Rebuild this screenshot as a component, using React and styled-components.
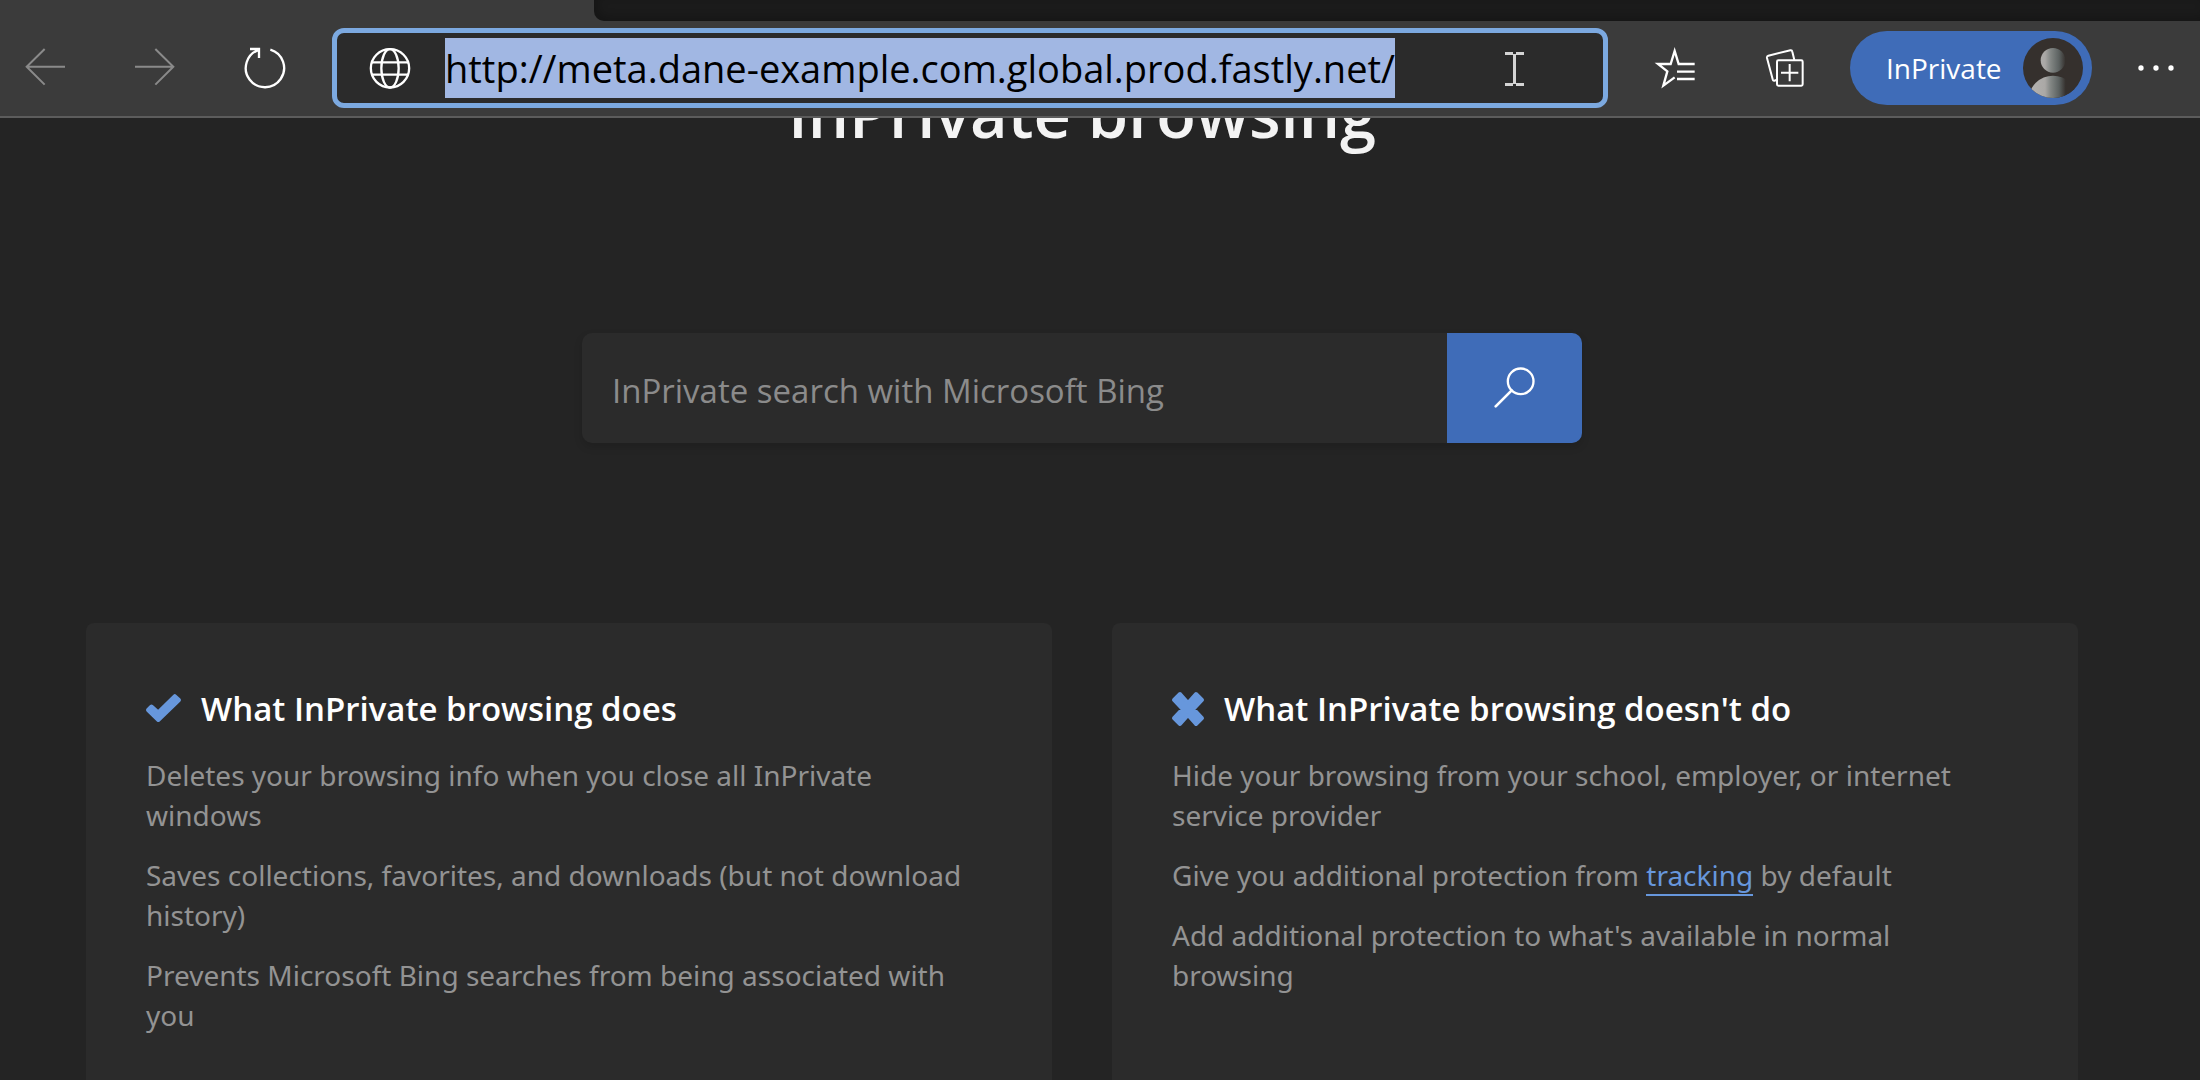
import React, { useEffect, useRef } from 'react';
import styled, { createGlobalStyle } from 'styled-components';

const color = {
  toolbar: '#3b3b3b',
  strip: '#1b1b1b',
  divider: '#5c5c5c',
  page: '#242424',
  surface: '#2b2b2b',
  blue: '#3f6cb8',
  ring: '#7ca9e0',
  accent: '#6797dc',
  text: '#ffffff',
  muted: '#939393',
  disabled: '#8a8a8a',
};

const uiFont = '"Segoe UI", "Open Sans", "Noto Sans", sans-serif';
const bodyFont = '"Segoe UI", "Noto Sans", "Open Sans", sans-serif';

const GlobalStyle = createGlobalStyle`
  *, *::before, *::after { box-sizing: border-box; }
  body {
    margin: 0;
    background: ${color.page};
    color: ${color.text};
    font-family: ${uiFont};
  }
  button, input { font-family: inherit; }
`;

const Window = styled.div`
  display: flex;
  flex-direction: column;
  height: 100vh;
  overflow: hidden;
`;

const Chrome = styled.header`
  flex: none;
  background: ${color.toolbar};
  border-bottom: 2px solid ${color.divider};
`;

const TabStrip = styled.div`
  display: grid;
  grid-template-columns: 27% 1fr;
  height: 21px;
`;

const StripSpace = styled.div`
  grid-column: 2;
  background: ${color.strip};
  border-bottom-left-radius: 10px;
  box-shadow: inset 4px -4px 8px rgba(0, 0, 0, 0.2);
`;

const Toolbar = styled.div`
  display: flex;
  align-items: center;
  gap: 20px;
  height: 95px;
  padding-bottom: 1px;
`;

const IconButton = styled.button`
  flex: none;
  display: flex;
  align-items: center;
  justify-content: center;
  width: ${(p) => p.$w || 90}px;
  height: 80px;
  padding: 0;
  border: 0;
  background: none;
  color: ${(p) => (p.disabled ? color.disabled : color.text)};
`;

const Icon = styled.svg`
  flex: none;
  display: block;
  width: ${(p) => p.$w || 40}px;
  height: ${(p) => p.$h || 40}px;
  overflow: visible;
  fill: none;
  stroke: currentColor;
  stroke-width: ${(p) => p.$stroke || 7};
`;

const AddressBar = styled.div`
  position: relative;
  flex: 1;
  min-width: 0;
  display: flex;
  align-items: center;
  gap: 35px;
  height: 80px;
  margin: 0 2px;
  padding: 0 20px 0 33px;
  background: ${color.surface};
  border: 5px solid ${color.ring};
  border-radius: 12px;
`;

const AddressInput = styled.input`
  flex: 1;
  min-width: 0;
  height: 60px;
  padding: 0;
  border: 0;
  outline: 0;
  background: transparent;
  color: ${color.text};
  font-size: 38px;
  line-height: 60px;

  &::selection {
    background: rgba(162, 184, 228, 0.996);
    color: #000000;
  }
`;

const Pointer = styled(Icon)`
  position: absolute;
  top: 19px;
  right: 79px;
  color: #d4d4d4;
  pointer-events: none;
`;

const Profile = styled.button`
  flex: none;
  display: flex;
  align-items: center;
  justify-content: space-between;
  width: 242px;
  height: 74px;
  padding: 0 9px 0 36px;
  border: 0;
  border-radius: 37px;
  background: ${color.blue};
  color: ${color.text};
  font-size: 28px;
  line-height: 40px;
`;

const Viewport = styled.main`
  flex: 1;
  min-height: 0;
  overflow: hidden;
  padding-right: 36px;
`;

const Content = styled.div`
  display: flex;
  flex-direction: column;
  align-items: center;
  gap: 180px;
  max-width: 1992px;
  margin: -45px auto 0;
`;

const Title = styled.h1`
  margin: 0;
  color: #f3f3f3;
  font-size: 65px;
  line-height: 80px;
  font-weight: 600;
`;

const Search = styled.form`
  display: flex;
  width: 100%;
  max-width: 1000px;
  height: 110px;
  border-radius: 10px;
  overflow: hidden;
  background: ${color.surface};
  box-shadow: 0 4px 8px rgba(0, 0, 0, 0.14);
`;

const SearchInput = styled.input`
  flex: 1;
  min-width: 0;
  padding: 4px 30px 0;
  border: 0;
  outline: 0;
  background: transparent;
  color: ${color.text};
  font-size: 33px;

  &::placeholder {
    color: #8b8b8b;
    opacity: 1;
  }
`;

const SearchButton = styled.button`
  flex: none;
  display: flex;
  align-items: center;
  justify-content: center;
  width: 135px;
  padding: 0;
  border: 0;
  background: ${color.blue};
  color: ${color.text};
`;

const Cards = styled.div`
  display: grid;
  grid-template-columns: 1fr 1fr;
  gap: 60px;
  width: 100%;
`;

const Card = styled.section`
  padding: 60px;
  background: ${color.surface};
  border-radius: 8px;
`;

const CardHeader = styled.div`
  display: flex;
  align-items: center;
  gap: 20px;
  margin-bottom: 20px;
  color: ${color.accent};
`;

const CardTitle = styled.h2`
  margin: 0;
  color: ${color.text};
  font-size: 33px;
  line-height: 52px;
  font-weight: 600;
`;

const Points = styled.ul`
  display: flex;
  flex-direction: column;
  gap: 20px;
  margin: 0;
  padding: 0;
  list-style: none;
  color: ${color.muted};
  font-family: ${bodyFont};
  font-size: 28px;
  line-height: 40px;
`;

const Link = styled.a`
  color: ${color.accent};
  text-decoration: none;
  border-bottom: 2px solid currentColor;
`;

const BackIcon = () => (
  <Icon viewBox="75 144 120 120" $stroke={6} aria-hidden="true">
    <path d="M195 200H80M134 147L80 200L134 254" />
  </Icon>
);

const ForwardIcon = () => (
  <Icon viewBox="405 144 120 120" $stroke={6} aria-hidden="true">
    <path d="M405 200H520M466 147L520 200L466 254" />
  </Icon>
);

const ReloadIcon = () => (
  <Icon viewBox="735 144 120 120" aria-hidden="true">
    <path d="M811 149A57.5 57.5 0 1 1 777 149.500M750 147H777V174" />
  </Icon>
);

const GlobeIcon = () => (
  <Icon viewBox="1110 144 120 120" aria-hidden="true">
    <circle cx="1170" cy="205" r="57.500" />
    <ellipse cx="1170" cy="205" rx="26" ry="57.500" />
    <path d="M1116 187H1224M1116 224H1224" />
  </Icon>
);

const FavoritesIcon = () => (
  <Icon viewBox="46 54 120 120" aria-hidden="true">
    <path d="M165 102H117L105 63L93 102H55L83 124L71 167L105 142" />
    <path d="M112 125H165M112 147H165" />
  </Icon>
);

const CollectionsIcon = () => (
  <Icon viewBox="380 58 120 120" $stroke={6} aria-hidden="true">
    <path d="M414 154L408 156Q404 157 403 152L386 88Q385 83 390 81L456 65Q461 64 462 69L468 94" />
    <rect x="416" y="95" width="77" height="76" rx="4" />
    <path d="M428 132H480M454 106V158" />
  </Icon>
);

const AvatarIcon = () => (
  <Icon viewBox="547 54 180 180" $w={60} $h={60} aria-hidden="true">
    <defs>
      <linearGradient id="person" gradientUnits="userSpaceOnUse" x1="575" y1="0" x2="675" y2="0">
        <stop offset="0" stopColor="#b3b1af" />
        <stop offset="0.380" stopColor="#aaa8a6" />
        <stop offset="0.550" stopColor="#828684" />
        <stop offset="0.800" stopColor="#5c6261" />
        <stop offset="1" stopColor="#35302d" />
      </linearGradient>
      <clipPath id="disc">
        <circle cx="637" cy="144" r="90" />
      </clipPath>
    </defs>
    <circle cx="637" cy="144" r="90" fill="#35302d" stroke="none" />
    <g clipPath="url(#disc)" fill="url(#person)" stroke="none">
      <circle cx="637" cy="121" r="37" />
      <circle cx="637" cy="240" r="73" />
    </g>
  </Icon>
);

const MoreIcon = () => (
  <Icon viewBox="891 84 120 120" aria-hidden="true">
    <g fill="currentColor" stroke="none">
      <circle cx="906" cy="144" r="8" />
      <circle cx="951" cy="144" r="8" />
      <circle cx="996" cy="144" r="8" />
    </g>
  </Icon>
);

const SearchIcon = () => (
  <Icon viewBox="284 174 120 120" aria-hidden="true">
    <circle cx="361" cy="214" r="38.500" />
    <path d="M334 241L286 289" strokeWidth="8" strokeLinecap="round" />
  </Icon>
);

const CheckIcon = () => (
  <Icon viewBox="0 0 35 34" $w={35} $h={34} $stroke={4} aria-hidden="true">
    <path
      d="M2 18L5.500 14.500L12.200 20.500L28.800 4.200L33 8L12.300 28Z"
      fill="currentColor"
      strokeLinejoin="round"
    />
  </Icon>
);

const CrossIcon = () => (
  <Icon viewBox="0 0 32 34" $w={32} $h={34} $stroke={4} aria-hidden="true">
    <path
      d="M2 8L8 2L16 11L24 2L30 8L21.500 17L30 26L24 32L16 23L8 32L2 26L10.500 17Z"
      fill="currentColor"
      strokeLinejoin="round"
    />
  </Icon>
);

function InfoCard({ icon, title, children }) {
  return (
    <Card>
      <CardHeader>
        {icon}
        <CardTitle>{title}</CardTitle>
      </CardHeader>
      <Points>{children}</Points>
    </Card>
  );
}

export default function App() {
  const address = useRef(null);

  useEffect(() => {
    address.current.focus();
    address.current.select();
  }, []);

  return (
    <Window>
      <GlobalStyle />
      <Chrome>
        <TabStrip>
          <StripSpace />
        </TabStrip>
        <Toolbar>
          <IconButton type="button" aria-label="Back" disabled><BackIcon /></IconButton>
          <IconButton type="button" aria-label="Forward" disabled><ForwardIcon /></IconButton>
          <IconButton type="button" aria-label="Refresh"><ReloadIcon /></IconButton>
          <AddressBar>
            <GlobeIcon />
            <AddressInput
              ref={address}
              type="text"
              aria-label="Address"
              spellCheck={false}
              defaultValue="http://meta.dane-example.com.global.prod.fastly.net/"
            />
            <Pointer viewBox="0 0 19 34" $w={19} $h={34} $stroke={3} aria-hidden="true">
              <path d="M0 1.500H8M11 1.500H19M0 32.500H8M11 32.500H19M9.500 2V32" />
            </Pointer>
          </AddressBar>
          <IconButton type="button" aria-label="Favorites"><FavoritesIcon /></IconButton>
          <IconButton type="button" aria-label="Collections"><CollectionsIcon /></IconButton>
          <Profile type="button">
            InPrivate
            <AvatarIcon />
          </Profile>
          <IconButton type="button" aria-label="Settings and more" $w={88}><MoreIcon /></IconButton>
        </Toolbar>
      </Chrome>
      <Viewport>
        <Content>
          <Title>InPrivate browsing</Title>
          <Search role="search" onSubmit={(e) => e.preventDefault()}>
            <SearchInput
              type="text"
              aria-label="InPrivate search with Microsoft Bing"
              placeholder="InPrivate search with Microsoft Bing"
            />
            <SearchButton type="submit" aria-label="Search"><SearchIcon /></SearchButton>
          </Search>
          <Cards>
            <InfoCard icon={<CheckIcon />} title="What InPrivate browsing does">
              <li>Deletes your browsing info when you close all InPrivate windows</li>
              <li>Saves collections, favorites, and downloads (but not download history)</li>
              <li>Prevents Microsoft Bing searches from being associated with you</li>
            </InfoCard>
            <InfoCard icon={<CrossIcon />} title="What InPrivate browsing doesn't do">
              <li>Hide your browsing from your school, employer, or internet service provider</li>
              <li>
                Give you additional protection from <Link href="#tracking">tracking</Link> by default
              </li>
              <li>Add additional protection to what's available in normal browsing</li>
            </InfoCard>
          </Cards>
        </Content>
      </Viewport>
    </Window>
  );
}
